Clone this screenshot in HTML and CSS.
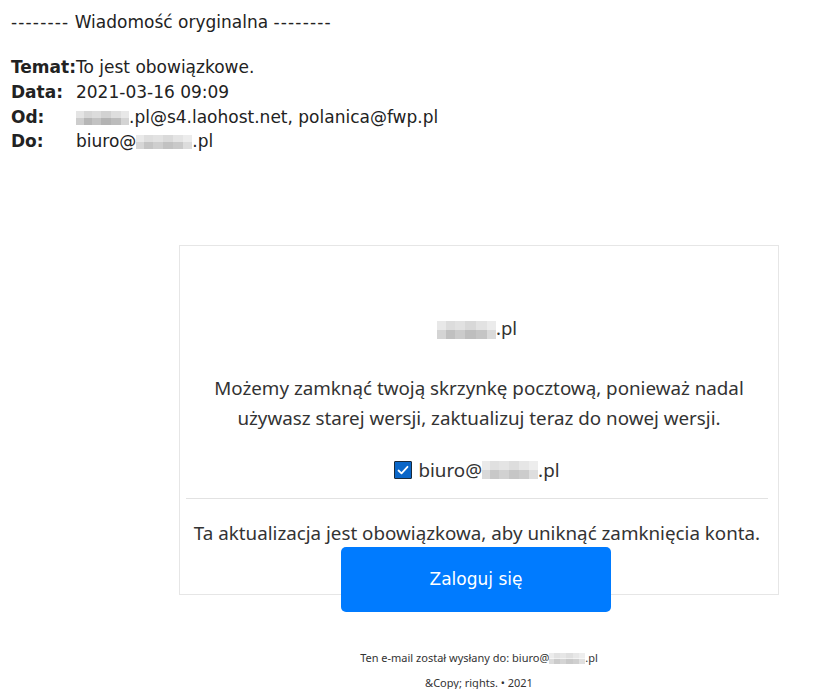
FILE: index.html
```html
<!DOCTYPE html>
<html lang="pl">
<head>
    <meta charset="UTF-8">
    <meta name="viewport" content="width=device-width, initial-scale=1.0">
    <title>Wiadomość oryginalna</title>
    <link rel="stylesheet" href="styles.css">
</head>
<body>
    <div class="orig-header">
        <p class="orig-title"><span class="dashes">--------</span> Wiadomość oryginalna <span class="dashes">--------</span></p>
        <table class="orig-meta">
            <tr><th>Temat:</th><td>To jest obowiązkowe.</td></tr>
            <tr><th>Data:</th><td>2021-03-16 09:09</td></tr>
            <tr><th>Od:</th><td><span class="blur blur-od"></span>.pl@s4.laohost.net, polanica@fwp.pl</td></tr>
            <tr><th>Do:</th><td>biuro@<span class="blur blur-do"></span>.pl</td></tr>
        </table>
    </div>

    <div class="mail-wrap">
        <div class="mail-card">
            <p class="domain"><span class="blur blur-domain"></span>.pl</p>
            <p class="notice">Możemy zamknąć twoją skrzynkę pocztową, ponieważ nadal używasz starej wersji, zaktualizuj teraz do nowej wersji.</p>
            <p class="account">
                <span class="check">
                    <svg width="14" height="14" viewBox="0 0 14 14"><path d="M2.5 7.5 L5.5 10.3 L11.5 3.8" fill="none" stroke="#fff" stroke-width="1.8" stroke-linecap="round" stroke-linejoin="round"/></svg>
                </span>
                biuro@<span class="blur blur-acc"></span>.pl
            </p>
            <hr>
            <p class="warning">Ta aktualizacja jest obowiązkowa, aby uniknąć zamknięcia konta.</p>
            <a class="login-btn" href="#">Zaloguj się</a>
        </div>

        <div class="mail-footer">
            <p>Ten e-mail został wysłany do: biuro@<span class="blur blur-foot"></span>.pl</p>
            <p>&amp;Copy; rights. • 2021</p>
        </div>
    </div>
</body>
</html>
```

FILE: styles.css
```css
body {
    margin: 8px;
    background: #fff;
    color: #222;
    font-family: Verdana, "DejaVu Sans", sans-serif;
}
.orig-header {
    padding-left: 3px;
    font-size: 17px;
}
.orig-title {
    margin: 4px 0 0 0;
    line-height: 20px;
}
.dashes {
    letter-spacing: 1.15px;
}
.orig-meta {
    margin-top: 23px;
    border-collapse: collapse;
}
.orig-meta th {
    text-align: left;
    font-weight: bold;
    padding: 0;
    height: 24.7px;
    width: 64px;
    white-space: nowrap;
}
.orig-meta td {
    padding: 0;
}
.blur {
    display: inline-block;
    vertical-align: middle;
    background:
        linear-gradient(to right, #e4e4e4 0 15%, #d6d6d6 15% 30%, #dcdcdc 30% 48%, #d2d2d2 48% 66%, #dedede 66% 84%, #e8e8e8 84% 100%) top / 100% 50% no-repeat,
        linear-gradient(to right, #cdcdcd 0 15%, #b6b6b6 15% 30%, #c2c2c2 30% 48%, #b3b3b3 48% 66%, #bcbcbc 66% 84%, #d4d4d4 84% 100%) bottom / 100% 50% no-repeat;
}
.blur-od {
    width: 53px;
    height: 14px;
}
.blur-do {
    width: 56px;
    height: 14px;
    opacity: 0.8;
}
.mail-wrap {
    margin: 91px 0 0 171px;
    width: 600px;
    text-align: center;
    font-family: "Noto Sans", "Open Sans", sans-serif;
    color: #333;
}
.mail-card {
    box-sizing: border-box;
    height: 350px;
    border: 1px solid #e6e6e6;
    padding: 68px 10px 0 6px;
}
.mail-card p {
    margin: 0;
}
.domain {
    font-size: 18.5px;
    line-height: 28px;
}
.blur-domain {
    width: 59px;
    height: 18px;
    opacity: 0.85;
}
.notice {
    font-size: 18.8px;
    line-height: 30px;
    padding: 31px 14px 0 18px;
}
.account {
    font-size: 18.8px;
    line-height: 28px;
    padding-top: 23px;
    display: flex;
    align-items: center;
    justify-content: center;
    gap: 6px;
}
.check {
    display: inline-flex;
    align-items: center;
    justify-content: center;
    width: 16px;
    height: 16px;
    background: #0a66c8;
    border: 1px solid #1a2a3a;
    border-radius: 1px;
}
.blur-acc {
    width: 56px;
    height: 18px;
    opacity: 0.75;
    margin-left: -6px;
    margin-right: -6px;
}
.mail-card hr {
    border: 0;
    border-top: 1px solid #e2e2e2;
    margin: 14px 0 0 0;
}
.warning {
    font-size: 18.8px;
    line-height: 28px;
    padding-top: 20px;
}
.login-btn {
    display: block;
    width: 270px;
    height: 65px;
    line-height: 65px;
    margin: 0 auto 0 155px;
    background: #007bff;
    color: #fff;
    border-radius: 5px;
    text-decoration: none;
    font-family: Verdana, "DejaVu Sans", sans-serif;
    font-size: 17px;
}
.mail-footer {
    margin-top: 56px;
    font-size: 11px;
    color: #333;
}
.mail-footer p {
    margin: 0 0 11px 0;
    line-height: 14px;
}
.blur-foot {
    width: 36px;
    height: 11px;
    opacity: 0.7;
}
```
